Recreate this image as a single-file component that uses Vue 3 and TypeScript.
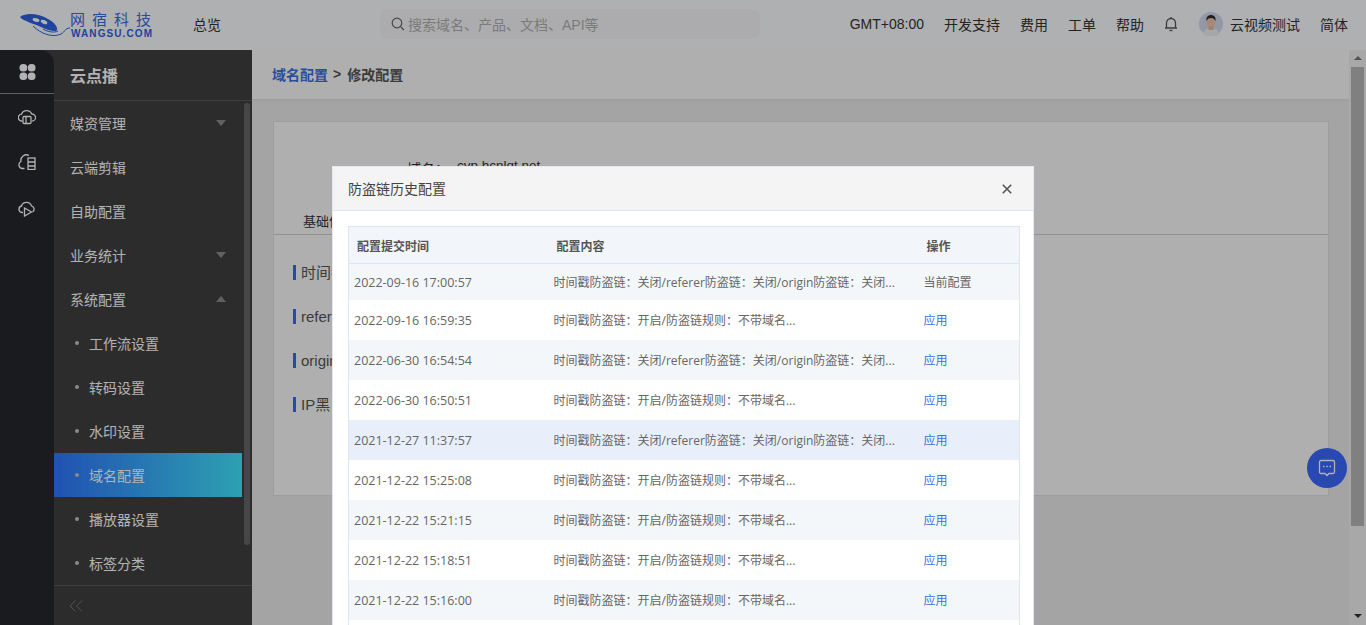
<script setup lang="ts">
interface MenuItem {
  label: string
  arrow?: 'up' | 'down'
  sub?: boolean
  active?: boolean
}

interface HistoryRow {
  time: string
  content: string
  current?: boolean
  hover?: boolean
}

const menu: MenuItem[] = [
  { label: '媒资管理', arrow: 'down' },
  { label: '云端剪辑' },
  { label: '自助配置' },
  { label: '业务统计', arrow: 'down' },
  { label: '系统配置', arrow: 'up' },
  { label: '工作流设置', sub: true },
  { label: '转码设置', sub: true },
  { label: '水印设置', sub: true },
  { label: '域名配置', sub: true, active: true },
  { label: '播放器设置', sub: true },
  { label: '标签分类', sub: true },
]

const navLinks = ['开发支持', '费用', '工单', '帮助']

// full-width colon, as in the Chinese copy
const colon = '\uFF1A'
const longText = `时间戳防盗链${colon}关闭/referer防盗链${colon}关闭/origin防盗链${colon}关闭...`
const shortText = `时间戳防盗链${colon}开启/防盗链规则${colon}不带域名...`

const rows: HistoryRow[] = [
  { time: '2022-09-16 17:00:57', content: longText, current: true },
  { time: '2022-09-16 16:59:35', content: shortText },
  { time: '2022-06-30 16:54:54', content: longText },
  { time: '2022-06-30 16:50:51', content: shortText },
  { time: '2021-12-27 11:37:57', content: longText, hover: true },
  { time: '2021-12-22 15:25:08', content: shortText },
  { time: '2021-12-22 15:21:15', content: shortText },
  { time: '2021-12-22 15:18:51', content: shortText },
  { time: '2021-12-22 15:16:00', content: shortText },
  { time: '', content: '' },
]

const sections = ['时间戳防盗链', 'referer防盗链', 'origin防盗链', 'IP黑白名单']
</script>

<template>
  <div class="app">
    <header class="topbar">
      <div class="logo">
        <svg class="logo__mark" width="52" height="26" viewBox="0 0 52 26">
          <path d="M1 5C8 0 20 2 29 7c6 3 10 8 9 11-1 2-8 1-16-3C13 11 4 9 1 5z" fill="#2f62e0" />
          <ellipse cx="17" cy="8" rx="3.500" ry="1.800" fill="#fff" transform="rotate(15 17 8)" />
          <ellipse cx="25" cy="10" rx="3.500" ry="1.800" fill="#fff" transform="rotate(25 25 10)" />
          <path d="M14 14c8 8 20 12 28 8 4-2 4-6 9-6" fill="none" stroke="#2f62e0" stroke-width="1" />
          <path d="M24 17c5 3 11 4 15 2" fill="none" stroke="#2f62e0" stroke-width="1" />
        </svg>
        <div class="logo__text">
          <span class="logo__cn">网宿科技</span>
          <span class="logo__en">WANGSU.COM</span>
        </div>
      </div>
      <a class="topbar__overview">总览</a>
      <div class="search">
        <svg width="14" height="14" viewBox="0 0 14 14" fill="none" stroke="#666" stroke-width="1.2">
          <circle cx="6" cy="6" r="4.8" />
          <path d="M9.6 9.6L13 13" />
        </svg>
        <span>搜索域名、产品、文档、API等</span>
      </div>
      <nav class="topnav">
        <span>GMT+08:00</span>
        <a v-for="link in navLinks" :key="link">{{ link }}</a>
        <svg class="bell" width="14" height="16" viewBox="0 0 14 16" fill="none" stroke="#555" stroke-width="1.3">
          <path d="M2.5 12V7a4.5 4.5 0 0 1 9 0v5zM1 12h12" />
          <path d="M5.5 14.5h3" />
          <path d="M7 1v1.2" />
        </svg>
        <div class="user">
          <svg width="24" height="24" viewBox="0 0 24 24">
            <circle cx="12" cy="12" r="12" fill="#d4d9ee" />
            <path d="M4 22c1-5 5-6 8-6s7 1 8 6a12 12 0 0 1-16 0z" fill="#f0f0f4" />
            <rect x="9.5" y="12" width="5" height="6" fill="#e6b9a0" />
            <ellipse cx="12" cy="10" rx="4.2" ry="5" fill="#eec4ac" />
            <path d="M7.5 9c-.8-4 2-6 4.5-6s5.300 2 4.500 6c-1-2-2-3-4.500-3S8.500 7 7.500 9z" fill="#2a2a2a" />
          </svg>
          <span>云视频测试</span>
        </div>
        <a>简体</a>
      </nav>
    </header>

    <div class="body">
      <aside class="rail">
        <div class="rail__top">
          <svg width="17" height="16" viewBox="0 0 18 17" fill="#fff">
            <rect x="0.500" y="0" width="8.200" height="8" rx="3.800" />
            <rect x="9.300" y="0" width="8.200" height="8" rx="3.800" />
            <rect x="0.500" y="9" width="8.200" height="8" rx="3.800" />
            <rect x="9.300" y="9" width="8.200" height="8" rx="3.800" />
          </svg>
        </div>
        <div class="rail__icon">
          <svg width="18" height="16" viewBox="0 0 18 16" fill="none" stroke="#fff" stroke-width="1.300">
            <path d="M4.500 12H4A3.400 3.400 0 0 1 3.500 5.200 5.500 5.500 0 0 1 13.800 5 3.500 3.500 0 0 1 14.200 12" />
            <rect x="5" y="7.500" width="8" height="7" rx="1" />
            <path d="M8 7.500v7" />
          </svg>
        </div>
        <div class="rail__icon">
          <svg width="18" height="16" viewBox="0 0 18 16" fill="none" stroke="#fff" stroke-width="1.300">
            <path d="M6.500 14.500H4.500A3.700 3.700 0 0 1 3 7.500 5.500 5.500 0 0 1 11 1.500" />
            <rect x="10" y="4" width="7" height="11.500" />
            <path d="M10 8h7M10 12h7" />
          </svg>
        </div>
        <div class="rail__icon">
          <svg width="18" height="16" viewBox="0 0 18 16" fill="none" stroke="#fff" stroke-width="1.300">
            <path d="M5 11.500H4A3.300 3.300 0 0 1 3.500 5 5.300 5.300 0 0 1 13.500 4.800 3.400 3.400 0 0 1 14.500 11" />
            <path d="M6.500 7l7 4-7 4z" />
          </svg>
        </div>
      </aside>

      <aside class="sidemenu">
        <div class="sidemenu__title">云点播</div>
        <div class="sidemenu__scroll">
          <ul class="sidemenu__list">
            <li
              v-for="item in menu"
              :key="item.label"
              class="sidemenu__item"
              :class="{ 'is-sub': item.sub, 'is-active': item.active }"
            >
              <i v-if="item.sub" class="dot"></i>
              <span>{{ item.label }}</span>
              <i v-if="item.arrow" class="caret" :class="'caret--' + item.arrow"></i>
            </li>
          </ul>
          <div class="sidemenu__thumb"></div>
        </div>
        <div class="sidemenu__foot">
          <svg width="14" height="12" viewBox="0 0 14 12" fill="none" stroke="#777" stroke-width="1">
            <path d="M6.500 0.500L1 6l5.500 5.500M13 0.500L7.500 6l5.500 5.500" />
          </svg>
        </div>
      </aside>

      <main class="main">
        <div class="crumbs">
          <a>域名配置</a>
          <span class="crumbs__sep">&gt;</span>
          <span>修改配置</span>
        </div>
        <div class="content">
          <section class="card">
            <div class="card__domain">
              <span class="card__domain-key">域名{{ colon }}</span>
              <span class="card__domain-value">cvp.hcnlqt.net</span>
            </div>
            <div class="card__tabs"><span>基础信息</span></div>
            <div v-for="name in sections" :key="name" class="card__section">{{ name }}</div>
          </section>
        </div>
      </main>

      <div class="pagebar">
        <i class="pagebar__up"></i>
        <div class="pagebar__thumb"></div>
        <i class="pagebar__down"></i>
      </div>
    </div>

    <button class="chat">
      <svg width="18" height="18" viewBox="0 0 18 18" fill="none" stroke="#fff" stroke-width="1.300">
        <path d="M3 1.500h12a1.500 1.500 0 0 1 1.500 1.500v10a1.500 1.500 0 0 1-1.500 1.500h-4L9 16.500l-2-2H3A1.500 1.500 0 0 1 1.500 13V3A1.500 1.500 0 0 1 3 1.500z" />
        <path d="M5 7.500h1.500M8.300 7.500h1.500M11.500 7.500H13" stroke-width="1.600" />
      </svg>
    </button>

    <div class="mask"></div>

    <div class="dialog">
      <div class="dialog__head">
        <span>防盗链历史配置</span>
        <svg width="10" height="10" viewBox="0 0 10 10" stroke="#555" stroke-width="1.600">
          <path d="M0.800 0.800l8.400 8.400M9.200 0.800L0.800 9.200" />
        </svg>
      </div>
      <div class="dialog__body">
        <table class="history">
          <colgroup>
            <col class="history__time" />
            <col class="history__content" />
            <col />
          </colgroup>
          <thead>
            <tr>
              <th>配置提交时间</th>
              <th>配置内容</th>
              <th>操作</th>
            </tr>
          </thead>
          <tbody>
            <tr
              v-for="(row, i) in rows"
              :key="i"
              :class="{ 'is-current': row.current, 'is-hover': row.hover, 'is-odd': i % 2 === 0 }"
            >
              <td>{{ row.time }}</td>
              <td>{{ row.content }}</td>
              <td>
                <span v-if="row.current">当前配置</span>
                <a v-else-if="row.time">应用</a>
              </td>
            </tr>
          </tbody>
        </table>
      </div>
    </div>
  </div>
</template>

<style>
html,
body {
  margin: 0;
  overflow: hidden;
}
</style>

<style scoped>
.app {
  position: relative;
  width: 1366px;
  height: 625px;
  overflow: hidden;
  display: flex;
  flex-direction: column;
  font-family: "Liberation Sans", "Noto Sans CJK SC", sans-serif;
  font-size: 14px;
  color: #333;
  background: #ebebeb;
}

.topbar {
  flex: none;
  height: 50px;
  display: flex;
  align-items: center;
  padding: 0 18px 2px;
  background: #fbfcff;
  box-sizing: border-box;
}

.logo {
  width: 175px;
  display: flex;
  align-items: center;
}

.logo__mark {
  flex: none;
  margin: 2px -1px 0 1px;
}

.logo__text {
  display: flex;
  flex-direction: column;
  line-height: 1;
  margin-top: 3px;
}

.logo__cn {
  font-size: 15px;
  letter-spacing: 7px;
  color: #3a6be0;
  margin-bottom: 2px;
  white-space: nowrap;
}

.logo__en {
  font-size: 10px;
  font-weight: 700;
  color: #2f62e0;
  letter-spacing: 1.100px;
  margin-left: 1px;
  white-space: nowrap;
}

.topbar__overview {
  width: 187px;
}

.search {
  width: 380px;
  height: 30px;
  box-sizing: border-box;
  padding-left: 11px;
  display: flex;
  align-items: center;
  gap: 3px;
  border-radius: 8px;
  background: #f6f7f9;
  color: #b0b0b0;
}

.topnav {
  margin-left: auto;
  display: flex;
  align-items: center;
  gap: 20px;
  color: #333;
}

.user {
  display: flex;
  align-items: center;
  gap: 7px;
  margin-left: 1px;
}

.body {
  flex: 1;
  min-height: 0;
  display: flex;
}

.rail {
  flex: none;
  width: 54px;
  background: #404040;
}

.rail__top,
.rail__icon {
  background: #25272b;
  display: flex;
  justify-content: center;
}

.rail__top {
  height: 43px;
  align-items: center;
  border-top-right-radius: 14px;
  border-bottom: 1px solid #888;
}

.rail__icon {
  height: 45px;
  padding-top: 15px;
  box-sizing: border-box;
}

.rail__icon:last-child {
  height: 488px;
  padding-top: 17px;
}

.sidemenu {
  flex: none;
  width: 198px;
  display: flex;
  flex-direction: column;
  background: #404040;
  color: #fff;
}

.sidemenu__title {
  flex: none;
  height: 51px;
  box-sizing: border-box;
  line-height: 54px;
  padding-left: 16px;
  font-size: 16px;
  font-weight: 700;
  border-bottom: 1px solid #5a5a5a;
}

.sidemenu__scroll {
  flex: 1;
  min-height: 0;
  display: flex;
}

.sidemenu__list {
  list-style: none;
  margin: 0;
  padding: 0;
  width: 188px;
  flex: none;
}

.sidemenu__item {
  height: 44px;
  display: flex;
  align-items: center;
  padding-left: 16px;
  box-sizing: border-box;
}

.sidemenu__item.is-sub {
  padding-left: 21px;
}

.sidemenu__item.is-active {
  background: linear-gradient(90deg, #2f75ff, #42e6ff);
}

.dot {
  width: 4px;
  height: 4px;
  border-radius: 50%;
  background: #c4c4c4;
  margin-right: 10px;
}

.caret {
  margin-left: auto;
  margin-right: 16px;
  width: 0;
  height: 0;
  border-left: 5px solid transparent;
  border-right: 5px solid transparent;
}

.caret--down {
  border-top: 6px solid #8c8c8c;
}

.caret--up {
  border-bottom: 6px solid #8c8c8c;
}

.sidemenu__thumb {
  margin: 2px 0 0 2px;
  width: 6px;
  height: 442px;
  border-radius: 4px;
  background: #666;
}

.sidemenu__foot {
  flex: none;
  height: 40px;
  box-sizing: border-box;
  padding-left: 15px;
  display: flex;
  align-items: center;
  border-top: 1px solid #5a5a5a;
}

.main {
  flex: 1;
  min-width: 0;
  display: flex;
  flex-direction: column;
}

.crumbs {
  flex: none;
  height: 49px;
  box-sizing: border-box;
  padding: 0 0 2px 20px;
  display: flex;
  align-items: center;
  gap: 5px;
  font-weight: 700;
  color: #555;
  background: #fbfbfb;
  box-shadow: 0 1px 3px rgba(0, 0, 0, 0.06);
}

.crumbs a {
  color: #3d6fe6;
}

.crumbs__sep {
  margin-right: 1px;
}

.content {
  flex: 1;
  padding: 22px 20px 0 21px;
}

.card {
  height: 375px;
  box-sizing: border-box;
  background: #fbfbfb;
  border: 1px solid #dfe4ea;
}

.card__domain {
  padding: 36px 0 0 133px;
  height: 82px;
  box-sizing: border-box;
  display: flex;
  gap: 18px;
}

.card__domain-key {
  width: 32px;
  white-space: nowrap;
}

.card__domain-value {
  font-size: 13.500px;
}

.card__tabs {
  height: 31px;
  box-sizing: border-box;
  padding: 7px 0 0 29px;
  border-bottom: 1px solid #d0d0d0;
  font-size: 13px;
}

.card__section {
  margin: 30px 0 0 19px;
  padding-left: 5px;
  height: 15px;
  line-height: 15px;
  border-left: 3px solid #3d67ff;
  font-size: 15px;
  color: #555;
}

.card__section + .card__section {
  margin-top: 29px;
}

.pagebar {
  flex: none;
  width: 17px;
  display: flex;
  flex-direction: column;
  align-items: center;
  background: #f1f1f1;
}

.pagebar__up,
.pagebar__down {
  width: 0;
  height: 0;
  border-left: 4px solid transparent;
  border-right: 4px solid transparent;
}

.pagebar__up {
  margin-top: 6px;
  border-bottom: 4px solid #777;
}

.pagebar__thumb {
  margin-top: 7px;
  width: 13px;
  height: 459px;
  background: #b8b8b8;
}

.pagebar__down {
  margin-top: 88px;
  border-top: 4px solid #333;
}

.chat {
  position: absolute;
  left: 1307px;
  top: 448px;
  width: 40px;
  height: 40px;
  padding: 0;
  border: 0;
  border-radius: 50%;
  background: #3d67ff;
  display: flex;
  align-items: center;
  justify-content: center;
}

.mask {
  position: absolute;
  inset: 0;
  background: rgba(0, 0, 0, 0.3);
}

.dialog {
  position: absolute;
  left: 332px;
  top: 166px;
  width: 702px;
  height: 470px;
  box-sizing: border-box;
  background: #fff;
  border: 1px solid #e4e9f0;
  border-bottom: 0;
}

.dialog__head {
  height: 44px;
  box-sizing: border-box;
  display: flex;
  align-items: center;
  justify-content: space-between;
  padding: 0 21px 2px 15px;
  background: #f4f4f4;
  border-bottom: 1px solid #dfe5ee;
  color: #444;
}

.dialog__head svg {
  margin-top: 2px;
}

.dialog__body {
  padding: 15px 13px 0 15px;
}

.history {
  width: 672px;
  table-layout: fixed;
  border-collapse: collapse;
  border: 1px solid #dfe5ee;
  font-size: 12px;
}

.history__time {
  width: 200px;
}

.history__content {
  width: 370px;
}

.history th {
  height: 36px;
  padding: 0 0 0 8px;
  text-align: left;
  font-weight: 700;
  color: #555;
  background: #f2f5f9;
  border-bottom: 1px solid #dfe5ee;
}

.history td {
  height: 40px;
  padding: 0 0 0 5px;
  font-family: "Open Sans", "Noto Sans CJK SC", sans-serif;
  color: #666;
  white-space: nowrap;
}

.history td:first-child {
  font-size: 12.500px;
}

.history tr.is-current td {
  height: 36px;
}

.history tr.is-odd td {
  background: #f4f7fa;
}

.history tr.is-hover td {
  background: #e8effa;
}

.history a {
  color: #3d6fe6;
}
</style>
